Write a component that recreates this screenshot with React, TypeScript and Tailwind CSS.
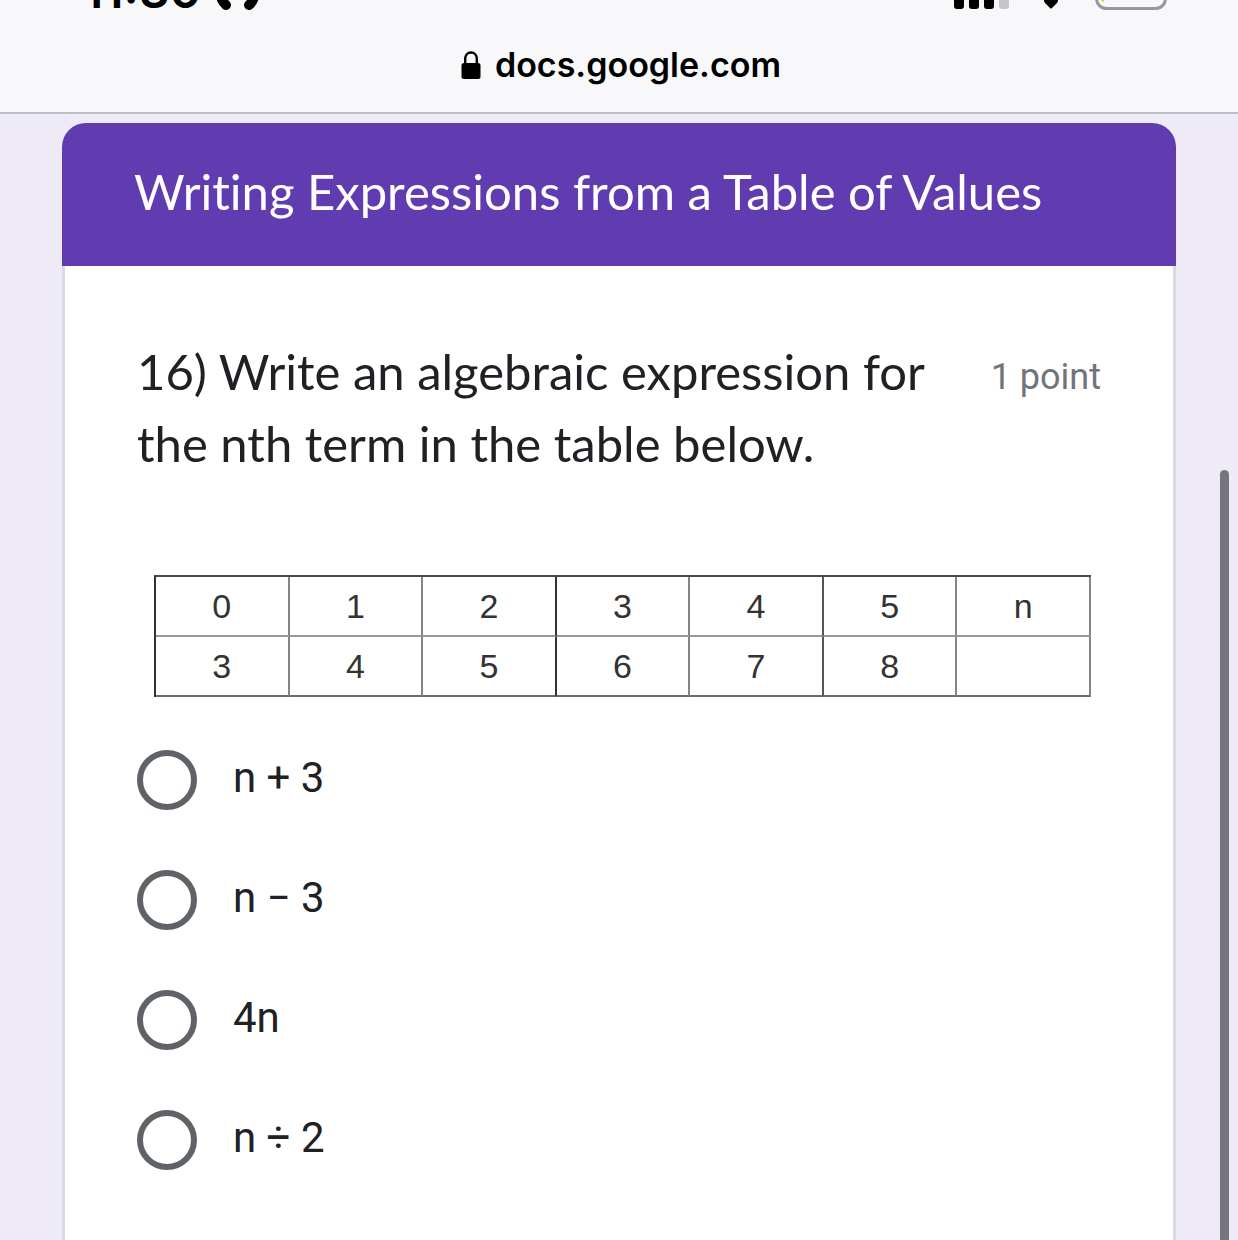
const terms = ['0', '1', '2', '3', '4', '5', 'n'];
const values = ['3', '4', '5', '6', '7', '8', ''];
const options = ['n + 3', 'n − 3', '4n', 'n ÷ 2'];

const columnLine = [
  'border-r-[#858585]',
  'border-r-[#858585]',
  'border-r-[#333333]',
  'border-r-[#858585]',
  'border-r-[#555555]',
  'border-r-[#858585]',
  'border-r-[#858585]',
];

function StatusBar() {
  return (
    <div className="flex h-7 items-start justify-between overflow-hidden pr-[71px] pl-[83px]">
      <div className="flex items-start">
        <span className="-mt-10 text-[48px] leading-[62px] font-semibold text-black">11:30</span>
        <svg className="ml-4 h-3 w-11" viewBox="0 0 44 12" fill="none" stroke="#000" aria-hidden="true">
          <path d="M3 -6Q5 2 9 5M38 -6Q36 2 32 5" strokeWidth="10" strokeLinecap="round" />
        </svg>
      </div>
      <div className="flex items-start">
        <svg className="h-3 w-14" viewBox="0 0 56 12" aria-hidden="true">
          <rect x="0" y="-10" width="10" height="19" rx="3" />
          <rect x="15" y="-10" width="10" height="19" rx="3" />
          <rect x="30" y="-10" width="10" height="19" rx="3" />
          <rect x="45" y="-10" width="10" height="19" rx="3" fill="#c6c6c8" />
        </svg>
        <svg className="ml-8 h-3 w-5" viewBox="0 0 20 12" aria-hidden="true">
          <path d="M2 0H16Q16 2 15 3L10 8Q9 9 8 8L3 3Q2 2 2 0Z" />
        </svg>
        <svg className="ml-[33px] h-3 w-[72px]" viewBox="0 0 72 12" fill="none" aria-hidden="true">
          <rect x="1.5" y="-30" width="69" height="38.5" rx="10" stroke="#98979d" strokeWidth="3" />
          <path d="M6 0H9V2Q7 2 6 0Z" fill="#f5c542" />
        </svg>
      </div>
    </div>
  );
}

function AddressBar() {
  return (
    <div className="flex h-[74px] items-center justify-center">
      <svg className="mr-3.5 ml-1 h-7 w-5" viewBox="0 0 20 28" aria-hidden="true">
        <rect x="0.5" y="12" width="19" height="16" rx="2.5" />
        <path d="M4.2 13V7.8C4.2 4 6.6 1.5 10 1.5S15.8 4 15.8 7.8V13" fill="none" stroke="#000" strokeWidth="2.4" />
      </svg>
      <span className="text-[34px] leading-[48px] font-semibold text-black">docs.google.com</span>
    </div>
  );
}

function ValueTable() {
  return (
    <div className="mt-24 pr-2.5 pl-[17px]">
      <table className="w-full table-fixed border-separate border-spacing-0 border-t-2 border-l-2 border-t-[#4a4a4a] border-l-[#333333] font-['Liberation_Sans',sans-serif] text-[34px] leading-[58px] text-[#333333]">
        <tbody>
          {[terms, values].map((row, r) => (
            <tr key={r} className="h-[60px]">
              {row.map((cell, c) => (
                <td
                  key={c}
                  className={`h-[60px] border-r-2 border-b-2 p-0 text-center ${columnLine[c]} ${r === 0 ? 'border-b-[#999999]' : 'border-b-[#6b6b6b]'}`}
                >
                  {cell}
                </td>
              ))}
            </tr>
          ))}
        </tbody>
      </table>
    </div>
  );
}

export default function App() {
  return (
    <div className="relative flex h-screen min-h-[800px] flex-col overflow-hidden bg-[#eeebf7] font-['Roboto',sans-serif] text-[#202124]">
      <header className="shrink-0 border-b-2 border-[#bebdc3] bg-[#f8f8fa] pb-2.5 font-['Inter',sans-serif]">
        <StatusBar />
        <AddressBar />
      </header>
      <main className="mx-[62px] mt-[9px] flex flex-1 flex-col">
        <h1 className="rounded-t-3xl bg-[#613cb0] px-[72px] pt-9 pb-[43px] font-['Lato',sans-serif] text-[49px] leading-[64px] text-white [font-variant-ligatures:none]">
          Writing Expressions from a Table of Values
        </h1>
        <section className="flex-1 border-x-[3px] border-[#dad8e2] bg-white px-[72px] pt-[69px]">
          <div className="flex items-start justify-between">
            <h2 id="question" className="w-[800px] font-['Lato',sans-serif] text-[49px] leading-[72px]">
              16) Write an algebraic expression for the nth term in the table below.
            </h2>
            <span className="text-[36px] leading-[84px] whitespace-nowrap text-[#70757a]">1 point</span>
          </div>
          <ValueTable />
          <div role="radiogroup" aria-labelledby="question" className="mt-[53px] flex flex-col gap-[60px]">
            {options.map((option) => (
              <label key={option} className="flex h-[60px] items-center gap-9">
                <input
                  type="radio"
                  name="answer"
                  className="size-[60px] shrink-0 appearance-none rounded-full border-6 border-[#5f6368] checked:border-[#613cb0]"
                />
                <span className="pb-1 text-[42px] leading-[56px]">{option}</span>
              </label>
            ))}
          </div>
        </section>
      </main>
      <div className="absolute top-[470px] right-[9px] -bottom-4 w-[9px] rounded-full bg-[#77757c]" />
    </div>
  );
}
